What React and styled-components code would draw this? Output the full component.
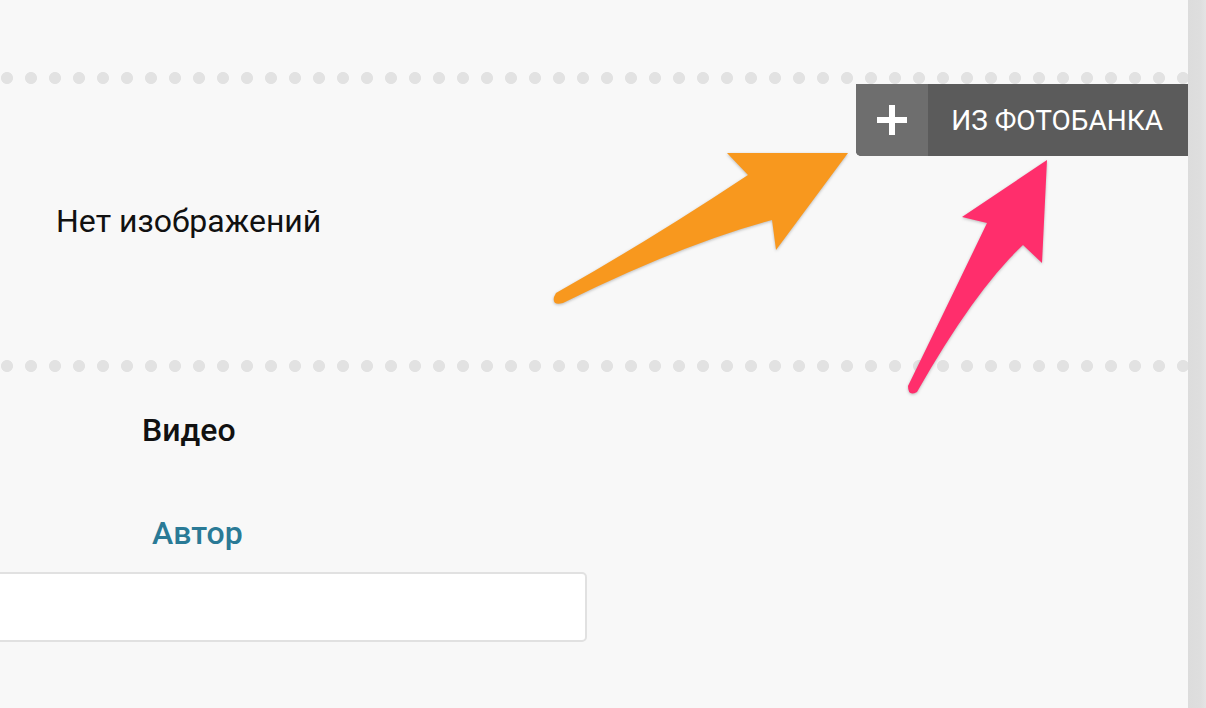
import React from 'react';
import styled, { createGlobalStyle } from 'styled-components';

const GlobalStyle = createGlobalStyle`
  html, body {
    margin: 0;
    padding: 0;
    background: #f8f8f8;
    overflow: hidden;
  }
  body {
    font-family: Roboto, "Liberation Sans", Arial, sans-serif;
  }
`;

const StyledPage = styled.div`
  display: flex;
  width: 1206px;
  height: 708px;
  position: relative;
  overflow: hidden;
`;

const StyledContent = styled.div`
  flex: 1;
  padding-top: 72px;
  background: #f8f8f8;
`;

const StyledScrollTrack = styled.div`
  width: 18px;
  background: linear-gradient(to right, #dcdcdc 0, #dedede 12px, #e4e4e4 18px);
`;

const StyledDots = styled.div`
  height: 12px;
  background-image: radial-gradient(circle at 12px 6px, #e2e2e2 5.6px, transparent 6.4px);
  background-size: 24px 12px;
  background-position: -5px 0;
  background-repeat: repeat-x;
`;

const StyledImages = styled.section`
  height: 276px;
  display: flex;
  flex-direction: column;
`;

const StyledToolbar = styled.div`
  display: flex;
  justify-content: flex-end;
`;

const StyledStockButton = styled.button`
  display: flex;
  align-items: stretch;
  height: 72px;
  padding: 0;
  border: none;
  border-radius: 0 0 0 5px;
  overflow: hidden;
  background: #5b5b5b;
  color: #fff;
  cursor: pointer;
  font-family: Roboto, "Liberation Sans", Arial, sans-serif;
`;

const StyledPlus = styled.span`
  width: 72px;
  display: flex;
  align-items: center;
  justify-content: center;
  background: #6e6e6e;
`;

const StyledButtonLabel = styled.span`
  display: flex;
  align-items: center;
  padding: 0 25px 0 23px;
  font-size: 28px;
  font-weight: 400;
  letter-spacing: 0;
  text-transform: uppercase;
`;

const StyledEmpty = styled.p`
  margin: 46px 0 0 56px;
  font-size: 32px;
  line-height: 38px;
  color: #111;
`;

const StyledFieldBlock = styled.div`
  display: flex;
  flex-direction: column;
`;

const StyledLabel = styled.div`
  padding-left: ${({ $indent }) => $indent}px;
  margin-top: ${({ $top }) => $top}px;
  font-size: 32px;
  line-height: 38px;
  font-weight: 500;
  color: ${({ $accent }) => ($accent ? '#2a7a96' : '#111')};
`;

const StyledInput = styled.input`
  margin: 20px 0 0 -12px;
  width: 599px;
  height: 70px;
  box-sizing: border-box;
  border: 2px solid #e1e1e1;
  border-radius: 5px;
  background: #fff;
  outline: none;
`;

const StyledArrows = styled.svg`
  position: absolute;
  left: 0;
  top: 0;
  pointer-events: none;
  filter: drop-shadow(0 1px 1.5px rgba(0, 0, 0, 0.25));
`;

const PlusIcon = () => (
  <svg width="32" height="32" viewBox="0 0 32 32">
    <rect x="1" y="13" width="30" height="6" fill="#fff" />
    <rect x="13" y="1" width="6" height="30" fill="#fff" />
  </svg>
);

const Arrows = () => (
  <StyledArrows width="1206" height="708" viewBox="0 0 1206 708">
    <path
      fill="#f8981e"
      d="M 556 293 Q 650 240 748 175 L 727 153 L 848 153 L 776 250 L 772 220 Q 680 245 563 303 Q 552 306 554 297 Z"
    />
    <path
      fill="#ff2e6c"
      d="M 908 386 Q 950 300 987 223 L 962 217 L 1047 160 L 1042 263 L 1023 245 Q 975 290 917 392 Q 908 397 908 386 Z"
    />
  </StyledArrows>
);

const App = () => {
  return (
    <StyledPage>
      <GlobalStyle />
      <StyledContent>
        <StyledDots />
        <StyledImages>
          <StyledToolbar>
            <StyledStockButton>
              <StyledPlus>
                <PlusIcon />
              </StyledPlus>
              <StyledButtonLabel>Из фотобанка</StyledButtonLabel>
            </StyledStockButton>
          </StyledToolbar>
          <StyledEmpty>Нет изображений</StyledEmpty>
        </StyledImages>
        <StyledDots />
        <StyledFieldBlock>
          <StyledLabel $indent={142} $top={39}>Видео</StyledLabel>
          <StyledLabel $indent={152} $top={65} $accent>Автор</StyledLabel>
          <StyledInput />
        </StyledFieldBlock>
      </StyledContent>
      <StyledScrollTrack />
      <Arrows />
    </StyledPage>
  );
};

export default App;
